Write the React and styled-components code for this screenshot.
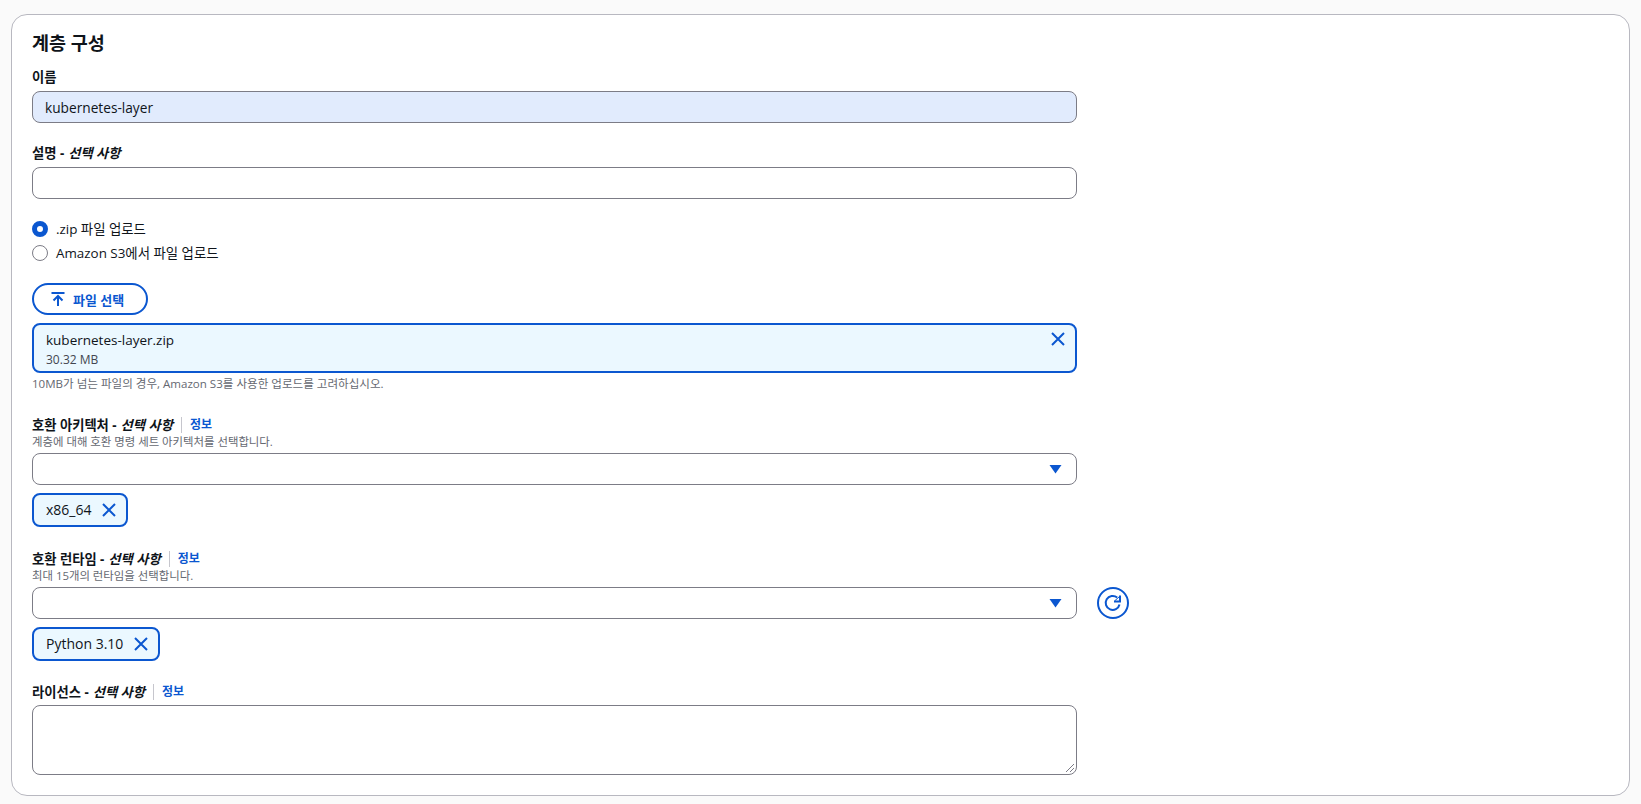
import React from "react";
import styled, { createGlobalStyle } from "styled-components";

const Global = createGlobalStyle`
  html, body { margin: 0; padding: 0; background: #fafafa; }
  body { font-family: "Open Sans", "Noto Sans CJK KR", sans-serif; color: #0f141a; }
  * { box-sizing: border-box; }
`;
const Page = styled.div`
  padding: 14px 11px 8px 11px;
  width: 1641px;
  height: 804px;
  overflow: hidden;
`;
const Card = styled.section`
  height: 782px;
  background: #fff;
  border: 1px solid #b8b8c0;
  border-radius: 16px;
  padding: 14px 20px 0 20px;
`;
const Title = styled.h2`
  margin: 0 0 11px;
  font-size: 18.5px;
  line-height: 28px;
  font-weight: 700;
  color: #0f141a;
`;
const Field = styled.div`
  width: ${(p) => p.$w || "1045px"};
  margin-bottom: ${(p) => p.$mb || 0}px;
`;
const LabelRow = styled.div`
  display: flex;
  align-items: center;
  height: 17px;
  margin-bottom: ${(p) => p.$mb ?? 6}px;
  font-size: 13.3px;
  font-weight: 700;
  color: #0f141a;
  em { font-style: italic; font-weight: 600; margin-left: 4px; }
`;
const Info = styled.a`
  margin-left: 8px;
  padding-left: 8px;
  border-left: 1px solid #c6c6cd;
  font-size: 12px;
  font-weight: 700;
  line-height: 16px;
  color: #0b57d0;
`;
const Desc = styled.div`
  height: 16px;
  font-size: 11.4px;
  line-height: 16px;
  color: #656871;
  margin-bottom: 3px;
  margin-top: 1px;
`;
const Input = styled.div`
  height: 32px;
  display: flex;
  align-items: center;
  padding: 1px 12px 0;
  border: 1px solid #7c7c86;
  border-radius: 8px;
  font-size: 13.7px;
  background: ${(p) => (p.$filled ? "#e1ebfd" : "#fff")};
  color: #0f141a;
`;
const SelectRow = styled.div`
  display: flex;
  align-items: center;
  gap: 20px;
`;
const Select = styled(Input)`
  width: 1045px;
  flex: none;
  justify-content: flex-end;
  padding: 0 14px 0 0;
`;
const Radios = styled.div`
  display: flex;
  flex-direction: column;
  gap: 8px;
  margin: 22px 0 22px;
`;
const RadioRow = styled.label`
  display: flex;
  align-items: center;
  gap: 8px;
  height: 16px;
  font-size: 13.4px;
  color: #0f141a;
`;
const RadioText = styled.span`
  margin-top: -2px;
`;
const Radio = styled.span`
  width: 16px;
  height: 16px;
  border-radius: 50%;
  flex: none;
  background: #fff;
  border: ${(p) => (p.$on ? "5px solid #0b57d0" : "1px solid #7c7c86")};
`;
const UploadButton = styled.button`
  display: flex;
  align-items: center;
  gap: 7px;
  width: 116px;
  height: 32px;
  padding: 0 16px;
  background: #fff;
  border: 2px solid #0b57d0;
  border-radius: 16px;
  font: 600 13px "Open Sans", "Noto Sans CJK KR", sans-serif;
  color: #0b57d0;
  white-space: nowrap;
`;
const FileBox = styled.div`
  display: flex;
  justify-content: space-between;
  height: 50px;
  margin-top: 8px;
  padding: 6px 9px 0 12px;
  background: #ebf8ff;
  border: 2px solid #0b57d0;
  border-radius: 8px;
`;
const FileName = styled.div`
  font-size: 13.5px;
  line-height: 18px;
`;
const FileSize = styled.div`
  font-size: 12px;
  line-height: 14px;
  margin-top: 4px;
  color: #424650;
`;
const Hint = styled.div`
  font-size: 11.55px;
  line-height: 16px;
  margin: 3px 0 24px;
  color: #656871;
`;
const Chip = styled.div`
  display: inline-flex;
  align-items: center;
  gap: 10px;
  height: 34px;
  margin-top: 8px;
  padding: 0 9px 2px 12px;
  background: #ebf8ff;
  border: 2px solid #0b57d0;
  border-radius: 8px;
  font-size: 14px;
  color: #0f141a;
`;
const ChipClose = styled.span`
  display: flex;
  margin-bottom: -2px;
`;
const Textarea = styled.div`
  position: relative;
  height: 70px;
  border: 1px solid #7c7c86;
  border-radius: 8px;
  background: #fff;
`;
const Grip = styled.svg`
  position: absolute;
  right: 1px;
  bottom: 1px;
`;
const RoundButton = styled.button`
  width: 32px;
  height: 32px;
  padding: 0;
  display: flex;
  align-items: center;
  justify-content: center;
  border: 2px solid #0b57d0;
  border-radius: 50%;
  background: #fff;
`;

const Close = ({ size = 16 }) => (
  <svg width={size} height={size} viewBox="0 0 16 16" fill="none" stroke="#0b57d0" strokeWidth="2">
    <path d="M2 2l12 12M14 2L2 14" />
  </svg>
);
const Caret = () => (
  <svg width="13" height="10" viewBox="0 0 13 10"><path d="M0.5 1h12L6.5 9.5z" fill="#0b57d0" /></svg>
);
const Upload = () => (
  <svg width="16" height="16" viewBox="0 0 16 16" fill="none" stroke="#0b57d0" strokeWidth="2">
    <path d="M1.5 2h13M8 15V5M3.5 9.5L8 5l4.5 4.5" />
  </svg>
);
const Refresh = () => (
  <svg width="20" height="20" viewBox="0 0 20 20" fill="none" stroke="#0b57d0" strokeWidth="2">
    <path d="M16.5 11.5A7 7 0 1 1 14.2 4.6" />
    <path d="M17 2.5V8.5H11" />
    <path d="M11.5 8L16.5 3.5" strokeWidth="1" />
  </svg>
);
const Label = ({ name, optional, info, mb }) => (
  <LabelRow $mb={mb}>
    <span>{name}{optional && " -"}</span>
    {optional && <em>선택 사항</em>}
    {info && <Info>정보</Info>}
  </LabelRow>
);

export default function App() {
  return (
    <Page>
      <Global />
      <Card>
        <Title>계층 구성</Title>
        <Field $mb={21}>
          <Label name="이름" />
          <Input $filled>kubernetes-layer</Input>
        </Field>
        <Field>
          <Label name="설명" optional />
          <Input />
        </Field>
        <Radios>
          <RadioRow><Radio $on /><RadioText>.zip 파일 업로드</RadioText></RadioRow>
          <RadioRow><Radio /><RadioText>Amazon S3에서 파일 업로드</RadioText></RadioRow>
        </Radios>
        <Field>
          <UploadButton><Upload />파일 선택</UploadButton>
          <FileBox>
            <div>
              <FileName>kubernetes-layer.zip</FileName>
              <FileSize>30.32 MB</FileSize>
            </div>
            <Close />
          </FileBox>
          <Hint>10MB가 넘는 파일의 경우, Amazon S3를 사용한 업로드를 고려하십시오.</Hint>
        </Field>
        <Field $mb={23}>
          <Label name="호환 아키텍처" optional info mb={0} />
          <Desc>계층에 대해 호환 명령 세트 아키텍처를 선택합니다.</Desc>
          <Select><Caret /></Select>
          <Chip>x86_64<ChipClose><Close /></ChipClose></Chip>
        </Field>
        <Field $w="1100px" $mb={22}>
          <Label name="호환 런타임" optional info mb={0} />
          <Desc>최대 15개의 런타임을 선택합니다.</Desc>
          <SelectRow>
            <Select><Caret /></Select>
            <RoundButton><Refresh /></RoundButton>
          </SelectRow>
          <Chip>Python 3.10<ChipClose><Close /></ChipClose></Chip>
        </Field>
        <Field>
          <Label name="라이선스" optional info mb={5} />
          <Textarea>
            <Grip width="10" height="10" viewBox="0 0 10 10" fill="none" stroke="#7c7c86">
              <path d="M1 9L9 1M5 9L9 5" />
            </Grip>
          </Textarea>
        </Field>
      </Card>
    </Page>
  );
}
